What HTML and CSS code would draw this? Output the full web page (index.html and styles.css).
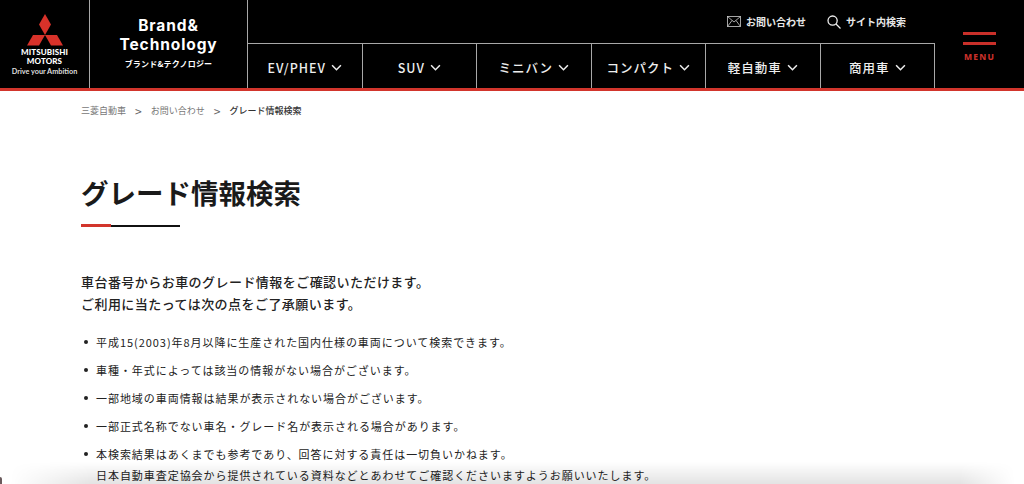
FILE: index.html
```html
<!DOCTYPE html>
<html lang="ja">
<head>
    <meta charset="UTF-8">
    <meta name="viewport" content="width=device-width, initial-scale=1.0">
    <title>グレード情報検索</title>
    <link rel="stylesheet" href="styles.css">
</head>
<body>

<header class="site-header">
    <a class="logo">
        <svg class="logo-mark" viewBox="0 0 36 32" width="36" height="32">
            <path fill="#d8322a" d="M18 0l6 10.5-6 10.5-6-10.5z"/>
            <path fill="#d8322a" d="M18 21l-6 10.5H0L6 21z"/>
            <path fill="#d8322a" d="M18 21l6 10.5h12L30 21z"/>
        </svg>
        <span class="logo-name">MITSUBISHI<br>MOTORS</span>
        <span class="logo-tag">Drive your Ambition</span>
    </a>
    <a class="brand">
        <span class="brand-en">Brand&amp;<br>Technology</span>
        <span class="brand-ja">ブランド&amp;テクノロジー</span>
    </a>
    <div class="header-main">
        <div class="utility">
            <a class="utility-link">
                <svg viewBox="0 0 14 11" width="14" height="11" fill="none" stroke="#ccc" stroke-width="0.8">
                    <rect x="0.5" y="0.5" width="13" height="10"/>
                    <path d="M0.5 0.5L7 6l6.5-5.5M0.5 10.5L5 4.5M13.5 10.5L9 4.5"/>
                </svg>
                お問い合わせ
            </a>
            <a class="utility-link">
                <svg viewBox="0 0 14 14" width="14" height="14" fill="none" stroke="#eee" stroke-width="1.3">
                    <circle cx="5.6" cy="5.6" r="4.6"/>
                    <path d="M9 9l4.5 4.5"/>
                </svg>
                サイト内検索
            </a>
        </div>
        <nav class="car-nav">
            <a class="car-nav-item">EV/PHEV<svg class="chevron" viewBox="0 0 10 6"><path d="M1 1l4 4 4-4"/></svg></a>
            <a class="car-nav-item">SUV<svg class="chevron" viewBox="0 0 10 6"><path d="M1 1l4 4 4-4"/></svg></a>
            <a class="car-nav-item">ミニバン<svg class="chevron" viewBox="0 0 10 6"><path d="M1 1l4 4 4-4"/></svg></a>
            <a class="car-nav-item">コンパクト<svg class="chevron" viewBox="0 0 10 6"><path d="M1 1l4 4 4-4"/></svg></a>
            <a class="car-nav-item">軽自動車<svg class="chevron" viewBox="0 0 10 6"><path d="M1 1l4 4 4-4"/></svg></a>
            <a class="car-nav-item">商用車<svg class="chevron" viewBox="0 0 10 6"><path d="M1 1l4 4 4-4"/></svg></a>
        </nav>
    </div>
    <a class="menu-button">
        <span class="menu-bar"></span>
        <span class="menu-bar"></span>
        <span class="menu-label">MENU</span>
    </a>
</header>

<main class="content">
    <ol class="breadcrumb">
        <li>三菱自動車</li>
        <li class="sep">&gt;</li>
        <li>お問い合わせ</li>
        <li class="sep">&gt;</li>
        <li class="current">グレード情報検索</li>
    </ol>

    <h1 class="page-title">グレード情報検索</h1>
    <div class="title-rule"></div>

    <p class="lead">車台番号からお車のグレード情報をご確認いただけます。<br>ご利用に当たっては次の点をご了承願います。</p>

    <ul class="notes">
        <li>平成15(2003)年8月以降に生産された国内仕様の車両について検索できます。</li>
        <li>車種・年式によっては該当の情報がない場合がございます。</li>
        <li>一部地域の車両情報は結果が表示されない場合がございます。</li>
        <li>一部正式名称でない車名・グレード名が表示される場合があります。</li>
        <li>本検索結果はあくまでも参考であり、回答に対する責任は一切負いかねます。<br>日本自動車査定協会から提供されている資料などとあわせてご確認くださいますようお願いいたします。</li>
    </ul>
</main>

<div class="window-shadow"></div>
<div class="window-corner"></div>

</body>
</html>
```

FILE: styles.css
```css
/* Page */
html, body {
    height: 100%;
}

body {
    margin: 0;
    position: relative;
    overflow: hidden;
    background-color: #fff;
    color: #1c1c1c;
    font-family: "Noto Sans CJK JP", "Noto Sans", sans-serif;
}

/* Header */
.site-header {
    display: flex;
    height: 88px;
    background-color: #000;
    border-bottom: 3px solid #d2352c;
    color: #fff;
}

.logo {
    width: 89px;
    flex: none;
    display: flex;
    flex-direction: column;
    align-items: center;
    padding-top: 14px;
    box-sizing: border-box;
}

.logo-mark {
    display: block;
    margin-bottom: 2px;
}

.logo-name {
    font-family: "Lato", sans-serif;
    font-size: 8px;
    font-weight: 900;
    line-height: 9px;
    text-align: center;
    letter-spacing: 0.1px;
}

.logo-tag {
    font-family: "Lato", sans-serif;
    font-size: 7.3px;
    font-weight: 700;
    line-height: 9px;
    margin-top: 1px;
    color: #ddd;
    white-space: nowrap;
}

.brand {
    width: 159px;
    flex: none;
    display: flex;
    flex-direction: column;
    align-items: center;
    padding-top: 16px;
    box-sizing: border-box;
    border-left: 1px solid #a8a8a8;
    border-right: 1px solid #a8a8a8;
}

.brand-en {
    font-family: "Inter", sans-serif;
    font-size: 15.5px;
    font-weight: 700;
    line-height: 19px;
    letter-spacing: 0.9px;
    text-align: center;
}

.brand-ja {
    font-size: 8px;
    font-weight: 700;
    line-height: 12px;
    margin-top: 4px;
    letter-spacing: 0.2px;
    white-space: nowrap;
}

.header-main {
    flex: 1;
    display: flex;
    flex-direction: column;
}

.utility {
    height: 44px;
    display: flex;
    justify-content: flex-end;
    align-items: center;
    gap: 21px;
    padding-right: 29px;
    border-bottom: 1px solid #a8a8a8;
    box-sizing: border-box;
}

.utility-link {
    display: flex;
    align-items: center;
    gap: 5px;
    font-size: 10px;
    font-weight: 700;
    color: #e8e8e8;
}

.car-nav {
    flex: 1;
    display: grid;
    grid-template-columns: repeat(6, 1fr);
}

.car-nav-item {
    display: flex;
    justify-content: center;
    align-items: center;
    gap: 5px;
    border-right: 1px solid #a8a8a8;
    font-size: 12.5px;
    font-weight: 500;
    letter-spacing: 1px;
    color: #eee;
    padding-top: 2px;
}

.chevron {
    width: 11px;
    height: 7px;
    fill: none;
    stroke: #eee;
    stroke-width: 1.4;
}

.menu-button {
    width: 89px;
    flex: none;
    display: flex;
    flex-direction: column;
    align-items: center;
    padding-top: 32px;
    box-sizing: border-box;
}

.menu-bar {
    width: 33px;
    height: 3px;
    background-color: #c9302a;
    margin-bottom: 7px;
}

.menu-label {
    font-size: 8.5px;
    font-weight: 800;
    letter-spacing: 1.2px;
    line-height: 10px;
    color: #c9302a;
    font-family: "Noto Sans", sans-serif;
}

/* Main content */
.content {
    padding: 0 81px;
}

.breadcrumb {
    display: flex;
    align-items: center;
    gap: 9px;
    list-style: none;
    margin: 0;
    padding: 13px 0 0;
    height: 14px;
    font-size: 9px;
    line-height: 14px;
    color: #777;
}

.breadcrumb .sep {
    font-size: 12px;
    color: #666;
}

.breadcrumb .current {
    color: #333;
    font-weight: 500;
}

.page-title {
    margin: 56px 0 0;
    font-size: 27.5px;
    line-height: 36px;
    font-weight: 700;
    color: #1a1a1a;
}

.title-rule {
    width: 99px;
    height: 3px;
    margin-top: 14px;
    background:
        linear-gradient(#d2352c, #d2352c) left top / 30px 3px no-repeat,
        linear-gradient(#111, #111) left center / 99px 2px no-repeat;
}

.lead {
    margin: 44px 0 0;
    font-size: 13px;
    line-height: 22px;
    font-weight: 500;
    letter-spacing: 0.45px;
    color: #222;
}

.notes {
    list-style: none;
    margin: 17px 0 0;
    padding: 0;
    font-size: 11px;
    line-height: 21px;
    letter-spacing: 0.95px;
    color: #222;
}

.notes li {
    position: relative;
    padding-left: 15px;
    margin-bottom: 7px;
}

.notes li::before {
    content: "";
    position: absolute;
    left: 3px;
    top: 8px;
    width: 4px;
    height: 4px;
    border-radius: 50%;
    background-color: #222;
}

/* Soft shadow of the window edge at the bottom of the picture */
.window-shadow {
    position: absolute;
    left: 0;
    right: 0;
    bottom: 0;
    height: 22px;
    background: linear-gradient(to bottom, rgba(0, 0, 0, 0), rgba(0, 0, 0, 0.11));
    -webkit-mask-image: linear-gradient(to right, transparent 10px, #000 90px, #000 960px, transparent 1015px);
    mask-image: linear-gradient(to right, transparent 10px, #000 90px, #000 960px, transparent 1015px);
    pointer-events: none;
}

.window-corner {
    position: absolute;
    left: 0;
    bottom: 0;
    width: 2px;
    height: 7px;
    background-color: #6a5a5c;
    border-top-right-radius: 2px;
}
```
